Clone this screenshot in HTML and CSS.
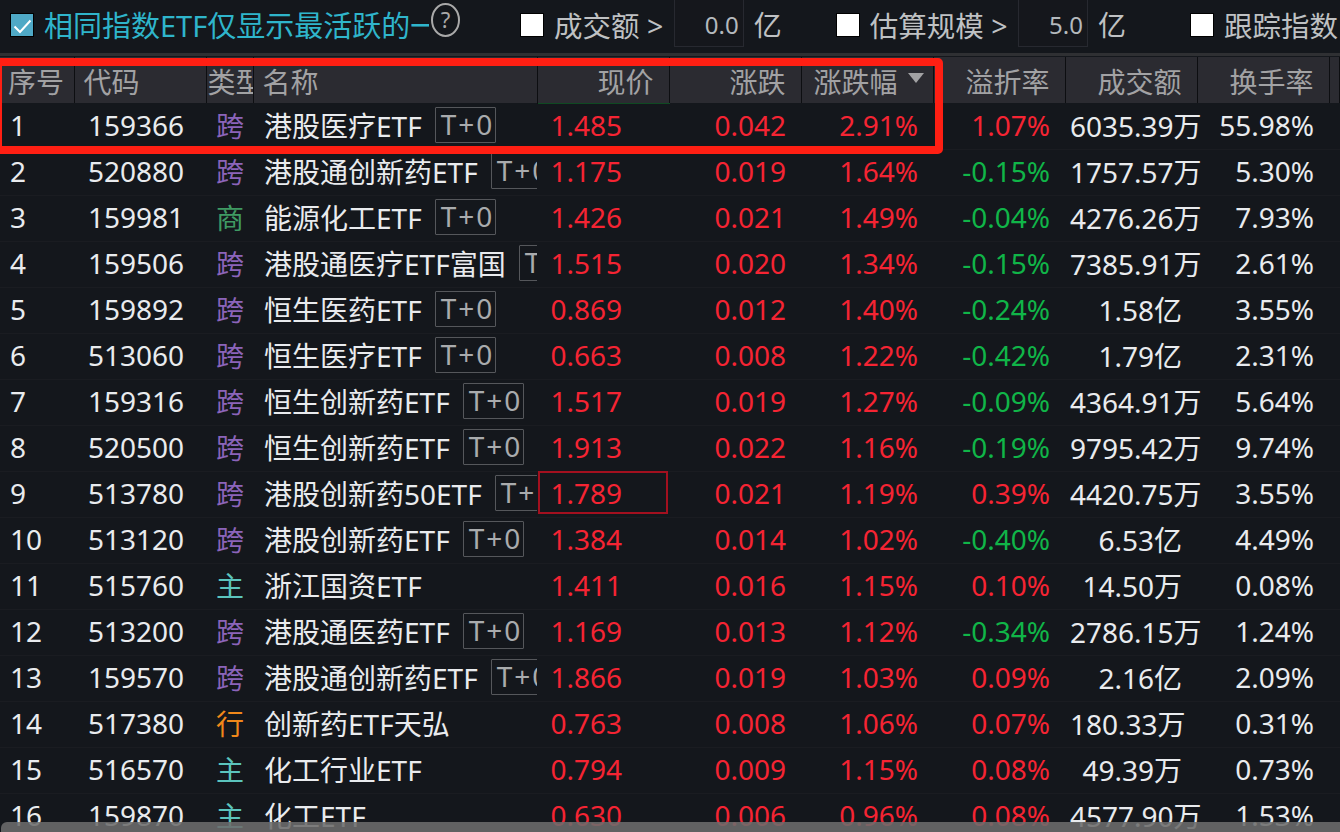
FILE: index.html
```html
<!DOCTYPE html>
<html lang="zh-CN">
<head>
    <meta charset="UTF-8">
    <meta name="viewport" content="width=device-width, initial-scale=1.0">
    <title>ETF 列表</title>
    <link rel="stylesheet" href="styles.css">
</head>
<body>
    <div class="toolbar">
        <span class="check on"><svg viewBox="0 0 22 22" width="22" height="22"><path d="M3.5 12.5l5.5 5.5L19.5 6.5" fill="none" stroke="#fff" stroke-width="2"/></svg></span>
        <span class="main-label">相同指数ETF仅显示最活跃的一</span>
        <span class="help">?</span>
        <span class="check first"></span>
        <span class="label">成交额 &gt;</span>
        <span class="num-box">0.0</span>
        <span class="unit">亿</span>
        <span class="check"></span>
        <span class="label">估算规模 &gt;</span>
        <span class="num-box">5.0</span>
        <span class="unit">亿</span>
        <span class="check last"></span>
        <span class="label">跟踪指数</span>
    </div>

    <table class="grid">
        <colgroup>
            <col class="c-no"><col class="c-code"><col class="c-type"><col class="c-name">
            <col class="c-n"><col class="c-n"><col class="c-n"><col class="c-n"><col class="c-n"><col class="c-n"><col>
        </colgroup>
        <thead>
            <tr>
                <th class="h-no">序号</th>
                <th class="h-code">代码</th>
                <th class="h-type">类型</th>
                <th class="h-name">名称</th>
                <th class="r h-price">现价</th>
                <th class="r">涨跌</th>
                <th class="r h-pct">涨跌幅<i class="sort"></i></th>
                <th class="r">溢折率</th>
                <th class="r">成交额</th>
                <th class="r">换手率</th>
                <th></th>
            </tr>
        </thead>
        <tbody>
            <tr><td class="no">1</td><td class="code">159366</td><td class="type kua">跨</td><td class="name">港股医疗ETF<span class="tag">T+0</span></td><td class="price up">1.485</td><td class="r up">0.042</td><td class="r up">2.91%</td><td class="r up">1.07%</td><td class="vol">6035.39万</td><td class="r">55.98%</td><td></td></tr>
            <tr><td class="no">2</td><td class="code">520880</td><td class="type kua">跨</td><td class="name">港股通创新药ETF<span class="tag">T+0</span></td><td class="price up">1.175</td><td class="r up">0.019</td><td class="r up">1.64%</td><td class="r down">-0.15%</td><td class="vol">1757.57万</td><td class="r">5.30%</td><td></td></tr>
            <tr><td class="no">3</td><td class="code">159981</td><td class="type shang">商</td><td class="name">能源化工ETF<span class="tag">T+0</span></td><td class="price up">1.426</td><td class="r up">0.021</td><td class="r up">1.49%</td><td class="r down">-0.04%</td><td class="vol">4276.26万</td><td class="r">7.93%</td><td></td></tr>
            <tr><td class="no">4</td><td class="code">159506</td><td class="type kua">跨</td><td class="name">港股通医疗ETF富国<span class="tag">T+0</span></td><td class="price up">1.515</td><td class="r up">0.020</td><td class="r up">1.34%</td><td class="r down">-0.15%</td><td class="vol">7385.91万</td><td class="r">2.61%</td><td></td></tr>
            <tr><td class="no">5</td><td class="code">159892</td><td class="type kua">跨</td><td class="name">恒生医药ETF<span class="tag">T+0</span></td><td class="price up">0.869</td><td class="r up">0.012</td><td class="r up">1.40%</td><td class="r down">-0.24%</td><td class="vol">1.58亿</td><td class="r">3.55%</td><td></td></tr>
            <tr><td class="no">6</td><td class="code">513060</td><td class="type kua">跨</td><td class="name">恒生医疗ETF<span class="tag">T+0</span></td><td class="price up">0.663</td><td class="r up">0.008</td><td class="r up">1.22%</td><td class="r down">-0.42%</td><td class="vol">1.79亿</td><td class="r">2.31%</td><td></td></tr>
            <tr><td class="no">7</td><td class="code">159316</td><td class="type kua">跨</td><td class="name">恒生创新药ETF<span class="tag">T+0</span></td><td class="price up">1.517</td><td class="r up">0.019</td><td class="r up">1.27%</td><td class="r down">-0.09%</td><td class="vol">4364.91万</td><td class="r">5.64%</td><td></td></tr>
            <tr><td class="no">8</td><td class="code">520500</td><td class="type kua">跨</td><td class="name">恒生创新药ETF<span class="tag">T+0</span></td><td class="price up">1.913</td><td class="r up">0.022</td><td class="r up">1.16%</td><td class="r down">-0.19%</td><td class="vol">9795.42万</td><td class="r">9.74%</td><td></td></tr>
            <tr><td class="no">9</td><td class="code">513780</td><td class="type kua">跨</td><td class="name">港股创新药50ETF<span class="tag">T+0</span></td><td class="price up cur">1.789</td><td class="r up">0.021</td><td class="r up">1.19%</td><td class="r up">0.39%</td><td class="vol">4420.75万</td><td class="r">3.55%</td><td></td></tr>
            <tr><td class="no">10</td><td class="code">513120</td><td class="type kua">跨</td><td class="name">港股创新药ETF<span class="tag">T+0</span></td><td class="price up">1.384</td><td class="r up">0.014</td><td class="r up">1.02%</td><td class="r down">-0.40%</td><td class="vol">6.53亿</td><td class="r">4.49%</td><td></td></tr>
            <tr><td class="no">11</td><td class="code">515760</td><td class="type zhu">主</td><td class="name">浙江国资ETF</td><td class="price up">1.411</td><td class="r up">0.016</td><td class="r up">1.15%</td><td class="r up">0.10%</td><td class="vol">14.50万</td><td class="r">0.08%</td><td></td></tr>
            <tr><td class="no">12</td><td class="code">513200</td><td class="type kua">跨</td><td class="name">港股通医药ETF<span class="tag">T+0</span></td><td class="price up">1.169</td><td class="r up">0.013</td><td class="r up">1.12%</td><td class="r down">-0.34%</td><td class="vol">2786.15万</td><td class="r">1.24%</td><td></td></tr>
            <tr><td class="no">13</td><td class="code">159570</td><td class="type kua">跨</td><td class="name">港股通创新药ETF<span class="tag">T+0</span></td><td class="price up">1.866</td><td class="r up">0.019</td><td class="r up">1.03%</td><td class="r up">0.09%</td><td class="vol">2.16亿</td><td class="r">2.09%</td><td></td></tr>
            <tr><td class="no">14</td><td class="code">517380</td><td class="type hang">行</td><td class="name">创新药ETF天弘</td><td class="price up">0.763</td><td class="r up">0.008</td><td class="r up">1.06%</td><td class="r up">0.07%</td><td class="vol">180.33万</td><td class="r">0.31%</td><td></td></tr>
            <tr><td class="no">15</td><td class="code">516570</td><td class="type zhu">主</td><td class="name">化工行业ETF</td><td class="price up">0.794</td><td class="r up">0.009</td><td class="r up">1.15%</td><td class="r up">0.08%</td><td class="vol">49.39万</td><td class="r">0.73%</td><td></td></tr>
            <tr><td class="no">16</td><td class="code">159870</td><td class="type zhu">主</td><td class="name">化工ETF</td><td class="price up">0.630</td><td class="r up">0.006</td><td class="r up">0.96%</td><td class="r up">0.08%</td><td class="vol">4577.90万</td><td class="r">1.53%</td><td></td></tr>
        </tbody>
    </table>

    <!-- 标注框和底部滚动条都盖在表格上面 -->
    <div class="mark"></div>
    <div class="scrollbar"></div>
</body>
</html>
```

FILE: styles.css
```css
html, body {
    margin: 0;
    height: 832px;
    overflow: hidden;
}
body {
    position: relative;
    background-color: #14171c;
    color: #e9ebee;
    font-family: "Noto Sans", "Noto Sans CJK SC", sans-serif;
    font-size: 28px;
}

/* 顶部筛选栏 */
.toolbar {
    display: flex;
    align-items: flex-start;
    height: 53px;
    border-bottom: 3px solid #2f3033;
    margin-bottom: 1px;
    white-space: nowrap;
    overflow: hidden;
}
.check {
    flex: none;
    width: 22px;
    height: 22px;
    margin: 13px 10px 0 0;
    background: #fff;
    border: 1px solid #000;
}
.check.on {
    margin-left: 10px;
    background: #4fa9c6;
}
.check.first {
    margin-left: 60px;
}
.check.last {
    margin-left: 10px;
}
.check svg {
    display: block;
}
.main-label {
    flex: none;
    width: 385px;
    overflow: hidden;
    font-size: 29px;
    line-height: 52px;
    color: #2fb5cb;
}
.help {
    flex: none;
    box-sizing: border-box;
    width: 29px;
    height: 34px;
    margin: 3px 0 0 2px;
    border: 2px solid #a9a9a9;
    border-radius: 50%;
    color: #a9a9a9;
    font-size: 22px;
    line-height: 29px;
    text-align: center;
}
.label {
    flex: none;
    font-size: 28.5px;
    line-height: 52px;
    color: #bfc1c3;
}
.num-box {
    flex: none;
    box-sizing: border-box;
    width: 70px;
    height: 47px;
    margin-left: 10.5px;
    padding-right: 4px;
    background: #15171c;
    border: 1px solid #272930;
    border-top: none;
    text-align: right;
    font-size: 24px;
    line-height: 50px;
    color: #b4b9bd;
}
.unit {
    flex: none;
    width: 82px;
    margin-left: 10px;
    line-height: 50px;
    color: #bfc1c3;
}

/* 行情表格 */
.grid {
    width: 1340px;
    table-layout: fixed;
    border-collapse: collapse;
}
.c-no { width: 74px; }
.c-code { width: 132px; }
.c-type { width: 47px; }
.c-name { width: 284px; }
.c-n { width: 132px; }
th {
    height: 46px;
    padding: 2px 0 0 0;
    box-sizing: border-box;
    background: #2b2b31;
    border-right: 1px solid #0d0e11;
    color: #a2a2a4;
    font-weight: normal;
    text-align: left;
    white-space: nowrap;
    overflow: hidden;
}
th.r {
    padding-right: 15px;
    text-align: right;
}
.h-no { padding-left: 8px; }
.h-code { padding-left: 9px; }
.h-type { padding-left: 1px; }
.h-name { padding-left: 9px; }
.h-price { border-bottom: 1px solid #0f4a22; }
th.h-pct { padding-right: 9px; }
.sort {
    display: inline-block;
    margin-left: 10px;
    border-left: 8px solid transparent;
    border-right: 8px solid transparent;
    border-top: 10px solid #a2a2a4;
    vertical-align: 10px;
}
td {
    height: 46px;
    padding: 0 0 2px 0;
    box-sizing: border-box;
    border-bottom: 1px solid #1a1c21;
    white-space: nowrap;
}
.r {
    padding-right: 15px;
    text-align: right;
}
.no { padding-left: 10px; }
.code { padding-left: 14px; }
.type { padding-left: 10px; }
.name {
    padding-left: 11px;
    overflow: hidden;
}
.price {
    padding-right: 47px;
    text-align: right;
}
.vol {
    padding: 0 15px 2px 5px;
    text-align: right;
}
.tag {
    display: inline-block;
    margin-left: 13px;
    padding: 0 1px 0 5px;
    height: 34px;
    border: 1px solid #55575b;
    border-radius: 1px;
    color: #a9abad;
    line-height: 32px;
    letter-spacing: 2px;
    vertical-align: 2px;
}
.up { color: #f52433; }
.down { color: #10b548; }
.kua { color: #8b64b9; }
.shang { color: #3f9a63; }
.zhu { color: #5bc4bd; }
.hang { color: #f0881a; }
.cur {
    position: relative;
}
.cur::after {
    content: "";
    position: absolute;
    top: -1px;
    left: 1px;
    right: 1px;
    bottom: 3px;
    border: 2px solid #a3101f;
}

.mark {
    position: absolute;
    left: -6px;
    top: 58px;
    width: 933px;
    height: 80px;
    border: 8px solid #ff1f13;
    border-radius: 5px;
}
.scrollbar {
    position: absolute;
    left: 1px;
    right: 0;
    top: 822px;
    height: 10px;
    background: rgba(108, 108, 108, 0.88);
    border-top-left-radius: 6px;
}
```
